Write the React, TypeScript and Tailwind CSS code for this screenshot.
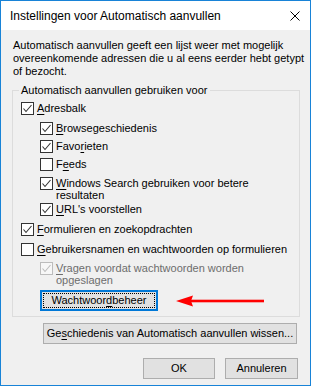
const font = { fontFamily: '"Liberation Sans", Arial, sans-serif' };

function Check({ on, disabled }: { on: boolean; disabled?: boolean }) {
  return (
    <span
      className={
        "flex h-[13px] w-[13px] shrink-0 items-center justify-center border " +
        (disabled ? "border-[#bcbcbc] bg-[#f7f7f7]" : "border-[#333333] bg-white")
      }
    >
      {on && (
        <svg width="11" height="11" viewBox="0 0 11 11">
          <polyline
            points="1.5,5.5 4,8.5 9.5,2"
            fill="none"
            stroke={disabled ? "#bcbcbc" : "#333333"}
            strokeWidth="1.1"
          />
        </svg>
      )}
    </span>
  );
}

function Row({
  on,
  pre,
  u,
  post,
  disabled,
  className,
  lines,
}: {
  on: boolean;
  pre: string;
  u: string;
  post: string;
  disabled?: boolean;
  className: string;
  lines?: string;
}) {
  return (
    <div className={"flex items-start gap-[3px] " + className}>
      <Check on={on} disabled={disabled} />
      <span
        className={
          "block " +
          (lines ? "leading-[12px] " : "leading-[13px] ") +
          (disabled ? "text-[#6d6d6d]" : "text-black")
        }
      >
        {pre}
        <span className="underline underline-offset-[2px]">{u}</span>
        {post}
        {lines && (
          <>
            <br />
            {lines}
          </>
        )}
      </span>
    </div>
  );
}

export default function App() {
  return (
    <div
      className="flex h-[386px] w-[311px] flex-col border border-[#1883d7] bg-[#f0f0f0] text-[11px] text-black"
      style={font}
    >
      <div className="flex h-[29px] shrink-0 items-center justify-between bg-white pl-[9px] pr-[10px]">
        <span className="text-[12px] leading-[14px]">Instellingen voor Automatisch aanvullen</span>
        <svg width="10" height="10" viewBox="0 0 10 10">
          <path d="M0.5 0.5 L9.5 9.5 M9.5 0.5 L0.5 9.5" stroke="#000" strokeWidth="1" />
        </svg>
      </div>

      <p className="ml-[12px] mt-[9px] w-[294px] leading-[13px]">
        Automatisch aanvullen geeft een lijst weer met mogelijk
        <br />
        overeenkomende adressen die u al eens eerder hebt getypt
        <br />
        of bezocht.
      </p>

      <div className="ml-[11px] mr-[10px] mt-[12px] border border-[#dcdcdc] pb-[5px]">
        <div className="-mt-[7px] ml-[6px] w-fit bg-[#f0f0f0] px-[2px] leading-[13px]">
          Automatisch aanvullen gebruiken voor
        </div>
        <div className="pl-[8px]">
          <Row on pre="" u="A" post="dresbalk" className="mt-[5px]" />
          <div className="pl-[19px]">
            <Row on pre="" u="B" post="rowsegeschiedenis" className="mt-[7px]" />
            <Row on pre="Favo" u="r" post="ieten" className="mt-[5px]" />
            <Row on={false} pre="F" u="e" post="eds" className="mt-[5px]" />
            <Row
              on
              pre=""
              u="W"
              post="indows Search gebruiken voor betere"
              lines="resultaten"
              className="mt-[6px]"
            />
            <Row on pre="" u="U" post="RL's voorstellen" className="mt-[2px]" />
          </div>
          <Row on pre="" u="F" post="ormulieren en zoekopdrachten" className="mt-[7px]" />
          <Row on={false} pre="" u="G" post="ebruikersnamen en wachtwoorden op formulieren" className="mt-[7px]" />
          <div className="pl-[19px]">
            <Row
              on
              disabled
              pre=""
              u="V"
              post="ragen voordat wachtwoorden worden"
              lines="opgeslagen"
              className="mt-[6px]"
            />
            <div className="mt-[4px] flex items-center">
              <button className="flex h-[21px] w-[118px] items-center justify-center border-2 border-[#0078d7] bg-[#e1e1e1] p-[1px]">
                <span className="flex h-full w-full items-center justify-center border border-dotted border-black">
                  Wachtwoor<span className="underline underline-offset-[2px]">d</span>beheer
                </span>
              </button>
              <svg className="ml-[18px]" width="88" height="12" viewBox="0 0 88 12">
                <polygon points="0,6 17,0.5 15,6 17,11.5" fill="#ff0000" />
                <rect x="15" y="4.7" width="73" height="2.6" fill="#ff0000" />
              </svg>
            </div>
          </div>
        </div>
      </div>

      <button className="ml-[42px] mt-[6px] h-[21px] w-[254px] border border-[#adadad] bg-[#e1e1e1]">
        Ge<span className="underline underline-offset-[2px]">s</span>chiedenis van Automatisch aanvullen wissen...
      </button>

      <div className="mr-[12px] mt-[14px] flex justify-end gap-[10px]">
        <button className="h-[21px] w-[72px] border border-[#adadad] bg-[#e1e1e1]">OK</button>
        <button className="h-[21px] w-[73px] border border-[#adadad] bg-[#e1e1e1]">Annuleren</button>
      </div>
    </div>
  );
}
